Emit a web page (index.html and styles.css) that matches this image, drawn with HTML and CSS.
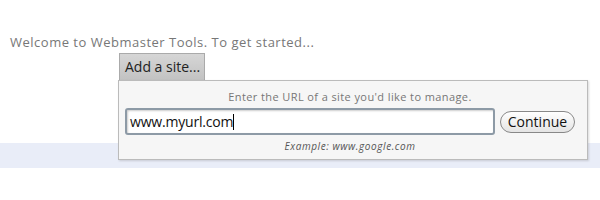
FILE: index.html
```html
<!DOCTYPE html>
<html lang="en">
<head>
    <meta charset="UTF-8">
    <title>Webmaster Tools</title>
    <link rel="stylesheet" href="styles.css">
</head>
<body>
    <p class="intro">Welcome to Webmaster Tools. To get started...</p>

    <div class="add-site">
        <span class="tab">Add a site...</span>

        <div class="popup">
            <p class="hint">Enter the URL of a site you'd like to manage.</p>
            <div class="url-row">
                <div class="url-input">www.myurl.com<span class="caret"></span></div>
                <button class="continue-btn">Continue</button>
            </div>
            <p class="example">Example: www.google.com</p>
        </div>
    </div>

    <div class="band"></div>
</body>
</html>
```

FILE: styles.css
```css
* {
    margin: 0;
    padding: 0;
    box-sizing: border-box;
}

body {
    font-family: 'Open Sans', 'Liberation Sans', sans-serif;
    background: white;
}

.intro {
    padding: 34px 0 0 10px;
    font-size: 13px;
    line-height: 16px;
    letter-spacing: 0.5px;
    color: #777;
}

.add-site {
    position: relative;
    margin: 3px 0 0 119px;
    width: 470px;
}

.tab {
    display: inline-block;
    height: 27px;
    padding: 0 4px 0 5px;
    border: 1px solid #aaa;
    border-bottom: none;
    background: linear-gradient(#d6d6d6, #c2c2c2);
    font-size: 14px;
    line-height: 26px;
    color: #222;
}

.popup {
    position: absolute;
    top: 100%;
    left: -1px;
    width: 470px;
    background: #f6f6f6;
    border: 1px solid #bbb;
    box-shadow: 1px 1px 2px rgba(0, 0, 0, 0.15);
    padding: 9px 12px 6px 6px;
    z-index: 2;
}

.hint {
    text-align: center;
    font-size: 11px;
    line-height: 14px;
    letter-spacing: 0.4px;
    color: #777;
}

.url-row {
    display: flex;
    align-items: center;
    gap: 5px;
    margin-top: 4px;
}

.url-input {
    width: 370px;
    height: 27px;
    border: 2px solid #8d9aa6;
    border-radius: 3px;
    box-shadow: inset 1px 1px 2px rgba(0, 0, 0, 0.2);
    background: white;
    padding: 0 3px;
    font-size: 14px;
    line-height: 23px;
    letter-spacing: -0.2px;
    color: #111;
}

.caret {
    display: inline-block;
    width: 1px;
    height: 16px;
    background: #000;
    vertical-align: -3px;
}

.continue-btn {
    width: 75px;
    height: 22px;
    border: 1px solid #888;
    border-radius: 11px;
    background: linear-gradient(#ffffff, #e4e4e4);
    font-family: inherit;
    font-size: 14px;
    color: #111;
}

.example {
    margin-top: 4px;
    text-align: center;
    font-size: 10px;
    line-height: 14px;
    letter-spacing: 0.6px;
    font-style: italic;
    color: #555;
}

.band {
    margin-top: 63px;
    height: 25px;
    background: #e9edf8;
}
```
